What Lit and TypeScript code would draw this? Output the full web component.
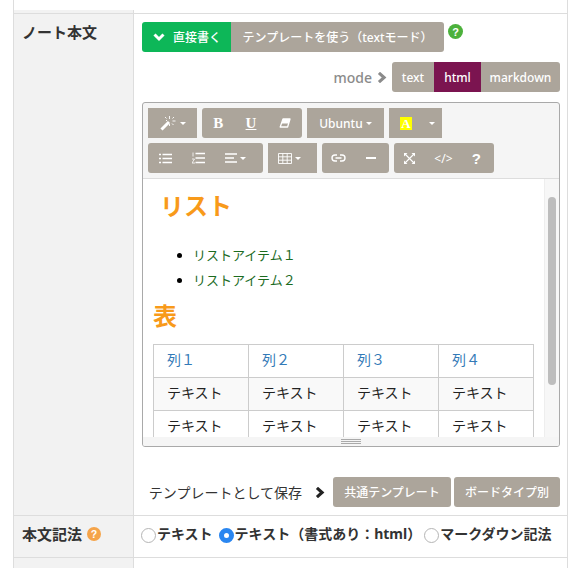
import { LitElement, html, css, svg } from "lit";
import { customElement } from "lit/decorators.js";

const chev = (w: number, color: string) => html`<svg class="chev" width="${w}" height="${w}" viewBox="0 0 12 12"><path d="M3.2 1 L8.8 6 L3.2 11" fill="none" stroke="${color}" stroke-width="3.4"/></svg>`;
const chevDown = html`<svg width="12" height="10" viewBox="0 0 12 10"><path d="M1.5 2.5 L6 7 L10.5 2.5" fill="none" stroke="#fff" stroke-width="3"/></svg>`;
const caret = html`<span class="caret"></span>`;
const ic = (w: number, h: number, body: unknown) => html`<svg width="${w}" height="${h}" viewBox="0 0 ${w} ${h}">${body}</svg>`;

const wand = ic(17, 16, svg`<path d="M1.5 14.5 L9 7" stroke="#fff" stroke-width="3"/><path d="M9.5 1v3M9.5 9v2M15.5 6h-3M6 5.5h1M5 2l1.5 1.5M14 2l-1.5 1.5M13.5 10l-1.5-1.5" stroke="#fff" stroke-width=".9"/>`);
const eraser = ic(12, 10, svg`<path d="M4 1 H11 L8.6 9 H1.2 Z" fill="none" stroke="#fff" stroke-width="1.3" stroke-linejoin="round"/><path d="M4 1 H11 L9.6 5.5 H2.6 Z" fill="#fff"/>`);
const ul = ic(13, 11, svg`<path d="M0 1.5h2M0 5.5h2M0 9.5h2" stroke="#fff" stroke-width="1.7"/><path d="M3.5 1.5h9.5M3.5 5.5h9.5M3.5 9.5h9.5" stroke="#fff" stroke-width="1.5"/>`);
const ol = ic(13, 12, svg`<path d="M1 0.5v4M0 7h2.5L0 11h3" stroke="#fff" stroke-width="0.8" fill="none"/><path d="M3.5 1.5h9.5M3.5 6h9.5M3.5 10.5h9.5" stroke="#fff" stroke-width="1.5"/>`);
const align = ic(12, 10, svg`<path d="M0 1h12M0 5h9M0 9h12" stroke="#fff" stroke-width="1.6"/>`);
const grid = ic(14, 11, svg`<path d="M.5.5h13v10H.5zM.5 3.8h13M.5 7.2h13M4.8.5v10M9.2.5v10" fill="none" stroke="#fff" stroke-width=".9"/>`);
const link = ic(15, 8, svg`<path d="M6 1H4a3 3 0 0 0 0 6h2M9 1h2a3 3 0 0 1 0 6H9M4.5 4h6" fill="none" stroke="#fff" stroke-width="1.4"/>`);
const minus = ic(10, 2, svg`<path d="M0 1h10" stroke="#fff" stroke-width="2"/>`);
const full = ic(11, 11, svg`<path d="M1 1l9 9M10 1l-9 9" stroke="#fff" stroke-width="1.1"/><path d="M0 0h3.5L0 3.5zM11 0H7.5L11 3.5zM0 11h3.5L0 7.5zM11 11H7.5L11 7.5z" fill="#fff"/>`);

@customElement("app-root")
export class AppRoot extends LitElement {
  static styles = css`
    :host { display: block; width: 581px; height: 568px; overflow: hidden; background: #fff;
      font-family: "Noto Sans", "Noto Sans CJK JP", sans-serif; color: #333; font-size: 14px; }
    * { box-sizing: border-box; }
    .tbl { margin-left: 13px; width: 555px; border-left: 1px solid #ddd; border-right: 1px solid #ddd; }
    .row { display: grid; grid-template-columns: 120px 1fr; border-bottom: 1px solid #ddd; }
    .strip { height: 14px; }
    .strip .l { margin-top: 10px; }
    .main { height: 502px; }
    .r2 { height: 42px; }
    .r3 { height: 30px; border-bottom: none; }
    .l { background: #f2f2f2; border-right: 1px solid #ddd; font-weight: 700; font-size: 15px; color: #333; }
    .main .l { padding: 8px 0 0 8px; line-height: 20px; }
    .r2 .l { display: flex; align-items: center; padding-left: 8px; gap: 5px; padding-bottom: 6px; }
    .c { min-width: 0; }
    .main .c { padding: 8px 7px 0 8px; display: flex; flex-direction: column; }
    .btn { background: #aca59b; color: #fff; font-size: 12px; font-weight: 500; height: 30px; display: flex; align-items: center; justify-content: center; white-space: nowrap; }
    .tabs { display: flex; align-items: flex-start; }
    .green { background: #0db758; width: 89px; border-radius: 3px 0 0 3px; gap: 8px; padding-left: 1px; }
    .tpl { width: 213px; border-radius: 0 3px 3px 0; }
    .help { margin: 2px 0 0 4px; }
    .mode { display: flex; justify-content: flex-end; align-items: center; margin-top: 10px; height: 30px; }
    .mode .lbl { color: #8b8b8b; font-weight: 500; font-size: 14px; margin-right: 4px; }
    .mode .chev { margin-right: 5px; }
    .seg { border-radius: 3px 0 0 3px; width: 42px; }
    .seg.on { background: #7b1450; width: 47px; border-radius: 0; }
    .seg.end { width: 79px; border-radius: 0 3px 3px 0; }
    .editor { margin-top: 10px; height: 345px; border: 1px solid #a9a9a9; border-radius: 3px; background: #f5f5f5; display: flex; flex-direction: column; overflow: hidden; }
    .bar { padding: 5px 5px 0; height: 76px; border-bottom: 1px solid #ddd; flex: none; }
    .tr { display: flex; gap: 5px; margin-bottom: 5px; }
    .g { background: #aca59b; color: #fff; height: 30px; border-radius: 3px; display: flex; align-items: center; justify-content: space-around; font-size: 12px; font-weight: 500; }
    .g.sq { border-radius: 0; }
    .g.pad { justify-content: flex-start; }
    .g.g20 { padding-left: 11px; gap: 20px; }
    .g.w-t { padding-left: 10px; }
    .g.w-l { padding-left: 9px; gap: 20px; }
    .g.w-h { padding-left: 11px; }
    .g.w-f { padding: 0 13px 0 10px; justify-content: space-between; }
    .caret { display: inline-block; width: 0; height: 0; border-left: 3px solid transparent; border-right: 3px solid transparent; border-top: 3px solid #fff; margin-left: 3px; }
    .ser { font-family: "Liberation Serif", serif; font-size: 15px; font-weight: 700; }
    .u { text-decoration: underline; }
    .cell-i { display: inline-flex; align-items: center; }
    .cd { font-size: 12px; font-weight: 400; }
    .qm { font-size: 15px; font-family: "Liberation Sans", sans-serif; font-weight: 700; }
    .hl { background: #ff0; color: #fff; font-family: "Liberation Serif", serif; font-size: 13px; font-weight: 700; width: 12px; height: 13px; display: flex; align-items: center; justify-content: center; line-height: 13px; margin-right: 14px; }
    .body { height: 258px; display: flex; background: #fff; flex: none; }
    .doc { flex: 1; overflow: hidden; padding: 0 10px; min-width: 0; height: 258px; }
    .sb { width: 15px; flex: none; background: #f7f7f7; border-left: 1px solid #eee; padding: 18px 2px 0 3px; }
    .thumb { height: 188px; background: #bdbdbd; border-radius: 4px; width: 8px; }
    h1 { margin: 9px 0 0 7px; font-size: 24px; line-height: 36px; color: #f89a1a; font-weight: 700; }
    ul.list { margin: 19px 0 0; padding: 0 0 0 40px; font-size: 13px; color: #000; }
    ul.list li { line-height: 25px; }
    ul.list span { color: #1c6b1f; }
    h2 { margin: 6px 0 0; font-size: 24px; line-height: 34px; color: #f89a1a; font-weight: 700; }
    table { border-collapse: collapse; margin-top: 11px; width: 381px; table-layout: fixed; font-size: 14px; color: #222; }
    td, th { border: 1px solid #ccc; height: 33px; padding: 0 0 3px 13px; line-height: 20px; text-align: left; font-weight: 400; }
    th { color: #337ab7; }
    tr.odd td { background: #f9f9f9; }
    .grip { flex: 1; display: flex; align-items: center; justify-content: center; background: #f5f5f5; }
    .grip i { display: block; width: 20px; height: 5px; border-top: 1px solid #aaa; border-bottom: 1px solid #aaa; }
    .grip i::after { content: ""; display: block; height: 1px; margin-top: 1px; background: #aaa; }
    .save { display: flex; justify-content: flex-end; align-items: center; margin-top: 30px; gap: 3px; }
    .save .t { font-size: 14px; color: #333; margin-right: 9px; }
    .save .chev { margin-right: 5px; }
    .b { border-radius: 3px; }
    .s1 { width: 118px; }
    .s2 { width: 106px; }
    .r2 .c { display: flex; align-items: center; padding: 0 0 8px 7px; font-weight: 700; color: #333; font-size: 14px; white-space: nowrap; }
    .radio { width: 15px; height: 15px; border-radius: 50%; border: 1px solid #b5b5b5; background: #fff; flex: none; margin: 6px 1px 0 0; }
    .radio.on { border: 5px solid #2a86f0; }
    .opt { display: flex; align-items: center; margin-right: 6px; }
    .opt.m { margin-right: 3px; }
  `;

  render() {
    const cols = ["列１", "列２", "列３", "列４"];
    return html`
      <div class="tbl">
        <div class="row strip"><div class="l"></div><div class="c"></div></div>
        <div class="row main">
          <div class="l">ノート本文</div>
          <div class="c">
            <div class="tabs">
              <div class="btn green">${chevDown}<span>直接書く</span></div>
              <div class="btn tpl">テンプレートを使う（textモード）</div>
              <svg class="help" width="15" height="15" viewBox="0 0 15 15"><circle cx="7.5" cy="7.5" r="7.5" fill="#4cb13c"/><text x="7.5" y="11.5" text-anchor="middle" font-size="11" font-weight="700" fill="#fff" font-family="Liberation Sans">?</text></svg>
            </div>
            <div class="mode">
              <span class="lbl">mode</span>${chev(11, "#8b8b8b")}
              <div class="btn seg">text</div><div class="btn seg on">html</div><div class="btn seg end">markdown</div>
            </div>
            <div class="editor">
              <div class="bar">
                <div class="tr">
                  <div class="g sq" style="width:49px"><span class="cell-i">${wand}${caret}</span></div>
                  <div class="g" style="width:100px"><span class="ser">B</span><span class="ser u">U</span>${eraser}</div>
                  <div class="g sq" style="width:77px"><span class="cell-i">Ubuntu${caret}</span></div>
                  <div class="g sq pad w-h" style="width:53px"><span class="hl">A</span>${caret}</div>
                </div>
                <div class="tr">
                  <div class="g pad g20" style="width:115px">${ul}${ol}<span class="cell-i">${align}${caret}</span></div>
                  <div class="g sq pad w-t" style="width:49px"><span class="cell-i">${grid}${caret}</span></div>
                  <div class="g pad w-l" style="width:67px">${link}${minus}</div>
                  <div class="g w-f" style="width:100px">${full}<span class="cd">&lt;/&gt;</span><span class="qm">?</span></div>
                </div>
              </div>
              <div class="body">
                <div class="doc">
                  <h1>リスト</h1>
                  <ul class="list"><li><span>リストアイテム１</span></li><li><span>リストアイテム２</span></li></ul>
                  <h2>表</h2>
                  <table>
                    <tr>${cols.map((c) => html`<th>${c}</th>`)}</tr>
                    <tr class="odd">${cols.map(() => html`<td>テキスト</td>`)}</tr>
                    <tr>${cols.map(() => html`<td>テキスト</td>`)}</tr>
                  </table>
                </div>
                <div class="sb"><div class="thumb"></div></div>
              </div>
              <div class="grip"><i></i></div>
            </div>
            <div class="save">
              <span class="t">テンプレートとして保存</span>${chev(11, "#222")}
              <div class="btn b s1">共通テンプレート</div>
              <div class="btn b s2">ボードタイプ別</div>
            </div>
          </div>
        </div>
        <div class="row r2">
          <div class="l">本文記法
            <svg width="14" height="14" viewBox="0 0 14 14"><circle cx="7" cy="7" r="7" fill="#f5a44a"/><text x="7" y="11" text-anchor="middle" font-size="10.5" font-weight="700" fill="#fff" font-family="Liberation Sans">?</text></svg>
          </div>
          <div class="c">
            <label class="opt"><span class="radio"></span>テキスト</label>
            <label class="opt m"><span class="radio on"></span>テキスト（書式あり：html）</label>
            <label class="opt"><span class="radio"></span>マークダウン記法</label>
          </div>
        </div>
        <div class="row r3"><div class="l"></div><div class="c"></div></div>
      </div>
    `;
  }
}
